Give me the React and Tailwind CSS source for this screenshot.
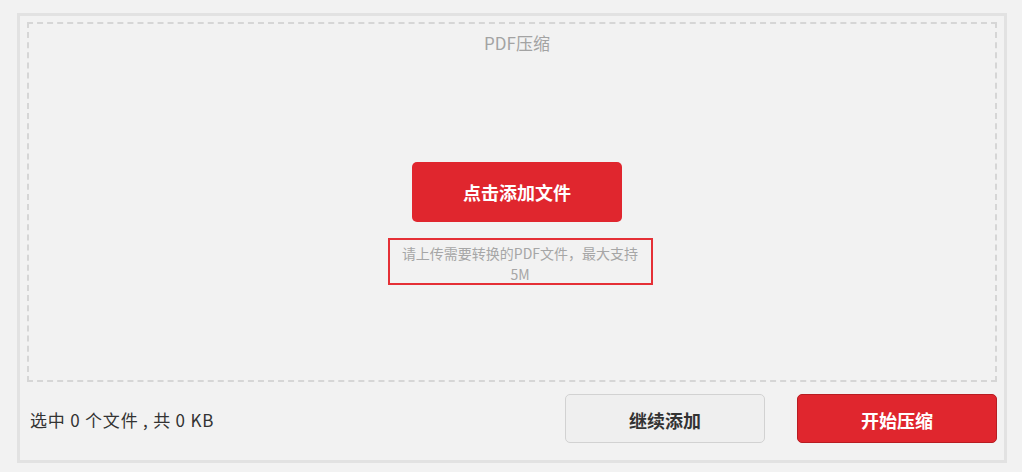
export default function App() {
  return (
    <div className="w-full h-[472px] bg-[#f2f2f2] pl-[17px] pt-[13px] font-['Noto_Sans_CJK_SC',sans-serif]">
      <div className="w-[990px] h-[450px] border-[3px] border-[#e2e2e2] pt-[6px] px-[7px]">
        {/* upload area */}
        <div className="h-[360px] border-2 border-dashed border-[#d6d6d6] pl-[10px] flex flex-col items-center">
          <div className="mt-[7px] text-[17px] leading-[24px] text-[#a3a3a3]">PDF压缩</div>
          <button className="mt-[107px] w-[210px] h-[60px] rounded-[5px] bg-[#e0262e] text-white text-[18px] font-bold pt-[1px]">
            点击添加文件
          </button>
          <div className="mt-[16px] ml-[6px] w-[265px] h-[47px] border-2 border-[#e53036] text-center text-[14px] leading-[21px] text-[#a6a6a6] pt-[3px]">
            请上传需要转换的PDF文件，最大支持
            <br />
            5M
          </div>
        </div>

        {/* footer */}
        <div className="mt-[12px] flex items-center">
          <div className="flex-1 pl-[3px] pt-[3px] text-[17px] tracking-[0.8px] text-[#333]">选中 0 个文件 , 共 0 KB</div>
          <button className="w-[200px] h-[49px] rounded-[5px] border border-[#d2d2d2] bg-[#efefef] text-[18px] font-bold text-[#333] pt-[3px]">
            继续添加
          </button>
          <button className="ml-[32px] w-[200px] h-[49px] rounded-[5px] border border-[#b81c22] bg-[#e0262e] text-[18px] font-bold text-white pt-[3px]">
            开始压缩
          </button>
        </div>
      </div>
    </div>
  );
}
